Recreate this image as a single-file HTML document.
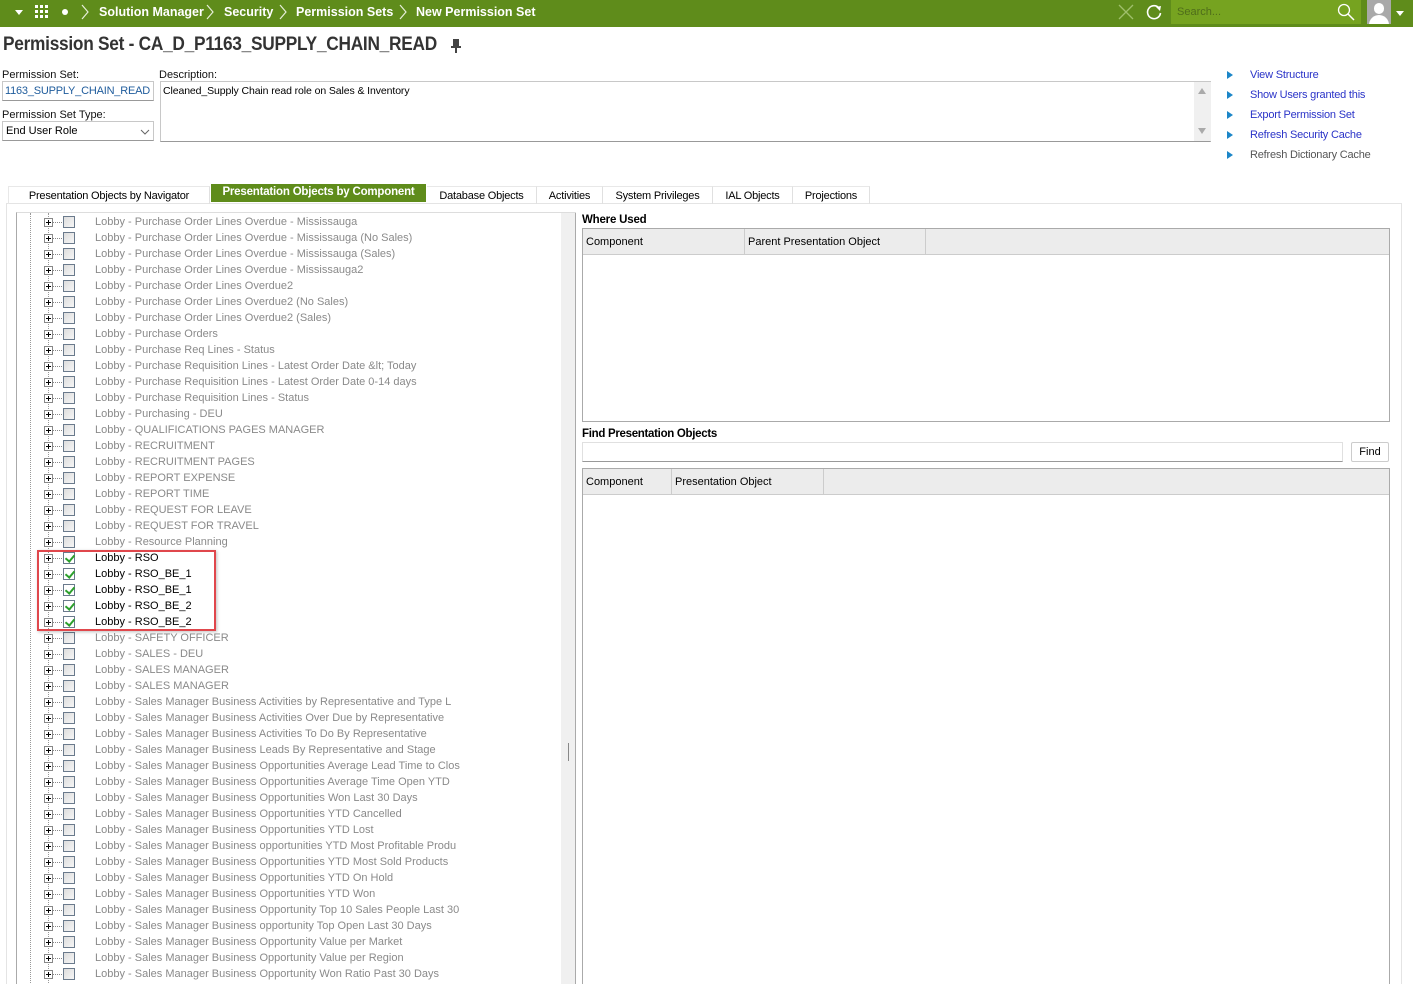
<!DOCTYPE html>
<html style="height:984px;overflow:hidden"><head><meta charset="utf-8"><style>
*{box-sizing:border-box;margin:0;padding:0}
body{width:1413px;height:984px;overflow:hidden;background:#fff;font-family:"Liberation Sans",sans-serif;font-size:11px;color:#000;position:relative}
.abs{position:absolute}
#top{left:0;top:0;width:1413px;height:27px;background:#5f8c1b}
#top .t{color:#fff;font-weight:bold;font-size:12.5px;top:5px}
#search{left:1171px;top:0;width:190px;height:24px;background:#76a320}
#search span{position:absolute;left:6px;top:6px;color:#4f6d1a;font-size:11px}
h1{position:absolute;left:3px;top:34px;font-size:19px;font-weight:bold;color:#333;letter-spacing:-0.3px;transform:scaleX(0.91);transform-origin:left}
.lbl{font-size:11px;color:#111}
.inp{border:1px solid #c8c8c8;border-bottom:1px solid #999;background:#fff}
.link{left:1250px;color:#2a33c8;font-size:11px;letter-spacing:-0.2px}
.tri{left:1227px;width:0;height:0;border-left:6px solid #1c86c8;border-top:4px solid transparent;border-bottom:4px solid transparent}
.tab{top:186px;height:18px;font-size:11px;padding:3px 0 0;text-align:center;border-right:1px solid #e0e0e0;border-top:1px solid #e8e8e8;letter-spacing:-0.2px}
.row{position:absolute;left:0;height:16px;width:540px}
.row .pl{position:absolute;left:43px;top:3px;width:9px;height:9px;border:1px solid #888;background:#fff}
.row .pl:before{content:"";position:absolute;left:1px;top:3px;width:5px;height:1px;background:#000}
.row .pl:after{content:"";position:absolute;left:3px;top:1px;width:1px;height:5px;background:#000}
.row .dl{position:absolute;left:52px;top:7px;width:9px;border-top:1px dotted #888}
.row .cb{position:absolute;left:62px;top:1px;width:12px;height:12px;border:1px solid #6a7a8c;background:linear-gradient(135deg,#ddd,#f6f6f6)}
.row .tx{position:absolute;left:94px;top:1px;color:#8a8a8a;font-size:11px;white-space:nowrap;letter-spacing:0}
.row.on .tx{color:#000}
.row.on .cb{background:#fff}
.row.on .cb:after{content:"";position:absolute;left:3px;top:0px;width:4px;height:7px;border-right:2px solid #2ca02c;border-bottom:2px solid #2ca02c;transform:rotate(40deg)}
.hdr{background:#ececec;border-bottom:1px solid #ccc}
</style></head><body>
<div id="top" class="abs">
 <div class="abs" style="left:15px;top:10px;border-left:4px solid transparent;border-right:4px solid transparent;border-top:5px solid #fff"></div>
 <svg class="abs" style="left:34px;top:4px" width="16" height="16"><g fill="#fff"><rect x="1" y="1" width="3" height="3"/><rect x="6" y="1" width="3" height="3"/><rect x="11" y="1" width="3" height="3"/><rect x="1" y="6" width="3" height="3"/><rect x="6" y="6" width="3" height="3"/><rect x="11" y="6" width="3" height="3"/><rect x="1" y="11" width="3" height="3"/><rect x="6" y="11" width="3" height="3"/><rect x="11" y="11" width="3" height="3"/></g></svg>
 <div class="abs" style="left:62px;top:9px;width:6px;height:6px;border-radius:3px;background:#fff"></div>
 <svg class="abs" style="left:80px;top:4px" width="10" height="16"><path d="M2 1L8 8L2 15" stroke="#e6eed8" fill="none" stroke-width="1.2"/></svg>
 <span class="abs t" style="left:99px">Solution Manager</span>
 <svg class="abs" style="left:205px;top:4px" width="10" height="16"><path d="M2 1L8 8L2 15" stroke="#e6eed8" fill="none" stroke-width="1.2"/></svg>
 <span class="abs t" style="left:224px">Security</span>
 <svg class="abs" style="left:278px;top:4px" width="10" height="16"><path d="M2 1L8 8L2 15" stroke="#e6eed8" fill="none" stroke-width="1.2"/></svg>
 <span class="abs t" style="left:296px">Permission Sets</span>
 <svg class="abs" style="left:398px;top:4px" width="10" height="16"><path d="M2 1L8 8L2 15" stroke="#e6eed8" fill="none" stroke-width="1.2"/></svg>
 <span class="abs t" style="left:416px">New Permission Set</span>
 <svg class="abs" style="left:1118px;top:4px" width="16" height="16"><path d="M1 1L15 15M15 1L1 15" stroke="#9fbf6c" stroke-width="1.3"/></svg>
 <svg class="abs" style="left:1145px;top:3px" width="18" height="18"><path d="M14 5A6.5 6.5 0 1 0 15.5 10" fill="none" stroke="#fff" stroke-width="1.6"/><path d="M11 4L16 3L15 8Z" fill="#fff"/></svg>
 <div id="search" class="abs"><span>Search...</span>
  <svg class="abs" style="left:166px;top:3px" width="18" height="18"><circle cx="7" cy="7" r="5.5" fill="none" stroke="#fff" stroke-width="1.3"/><path d="M11 11L17 17" stroke="#fff" stroke-width="1.5"/></svg></div>
 <div class="abs" style="left:1367px;top:0;width:24px;height:24px;background:#a9a9a9;overflow:hidden"><div class="abs" style="left:7px;top:3px;width:10px;height:11px;border-radius:5px;background:#fff"></div><div class="abs" style="left:2px;top:15px;width:20px;height:14px;border-radius:10px 10px 0 0;background:#fff"></div></div>
 <div class="abs" style="left:1396px;top:11px;border-left:4px solid transparent;border-right:4px solid transparent;border-top:5px solid #fff"></div>
</div>

<h1>Permission Set - CA_D_P1163_SUPPLY_CHAIN_READ</h1>
<svg class="abs" style="left:450px;top:39px" width="12" height="14"><path d="M3 1H9M4 1V7H8V1M1 8H11M6 8V14" stroke="#444" stroke-width="2" fill="#444"/></svg>

<div class="abs lbl" style="left:2px;top:69px">Permission Set:</div>
<div class="abs inp" style="left:2px;top:81px;width:152px;height:20px;overflow:hidden"><span class="abs" style="left:2px;top:3px;color:#1f5c9c;font-size:11px;letter-spacing:-0.2px">1163_SUPPLY_CHAIN_READ</span></div>
<div class="abs lbl" style="left:2px;top:109px">Permission Set Type:</div>
<div class="abs inp" style="left:2px;top:121px;width:152px;height:20px"><span class="abs" style="left:3px;top:3px;font-size:11px">End User Role</span><svg class="abs" style="left:137px;top:6px" width="10" height="8"><path d="M1 2L5 6L9 2" stroke="#666" fill="none"/></svg></div>
<div class="abs lbl" style="left:159px;top:69px">Description:</div>
<div class="abs inp" style="left:160px;top:81px;width:1051px;height:61px"><span class="abs" style="left:2px;top:3px;font-size:10.5px;letter-spacing:-0.1px">Cleaned_Supply Chain read role on Sales &amp; Inventory</span>
 <div class="abs" style="left:1033px;top:0;width:17px;height:59px;background:#f0f0f0"><div class="abs" style="left:4px;top:6px;border-left:4px solid transparent;border-right:4px solid transparent;border-bottom:6px solid #aaa"></div><div class="abs" style="left:4px;top:46px;border-left:4px solid transparent;border-right:4px solid transparent;border-top:6px solid #aaa"></div></div></div>

<div class="abs tri" style="top:71px"></div><div class="abs link" style="top:69px">View Structure</div>
<div class="abs tri" style="top:91px"></div><div class="abs link" style="top:89px">Show Users granted this</div>
<div class="abs tri" style="top:111px"></div><div class="abs link" style="top:109px">Export Permission Set</div>
<div class="abs tri" style="top:131px"></div><div class="abs link" style="top:129px">Refresh Security Cache</div>
<div class="abs tri" style="top:151px"></div><div class="abs link" style="top:149px;color:#555">Refresh Dictionary Cache</div>

<!-- tabs -->
<div class="abs" style="left:6px;top:203px;width:1396px;height:781px;border:1px solid #e4e4e4;border-bottom:none"></div>
<div class="abs tab" style="left:8px;width:202px;border-left:1px solid #e8e8e8">Presentation Objects by Navigator</div>
<div class="abs tab" style="left:211px;width:215px;top:184px;height:18px;background:#5f8c1b;color:#fff;font-weight:bold;font-size:11.5px;padding-top:2px;border:none">Presentation Objects by Component</div>
<div class="abs tab" style="left:427px;width:110px">Database Objects</div>
<div class="abs tab" style="left:537px;width:66px">Activities</div>
<div class="abs tab" style="left:603px;width:110px">System Privileges</div>
<div class="abs tab" style="left:713px;width:80px">IAL Objects</div>
<div class="abs tab" style="left:793px;width:77px">Projections</div>

<!-- tree -->
<div class="abs" style="left:16px;top:212px;width:560px;height:772px;border-left:1px solid #aaa;border-top:1px solid #ddd;overflow:hidden">
 <div class="abs" style="left:13px;top:0;height:772px;border-left:1px dotted #999"></div>
 <div class="abs" style="left:31px;top:0;height:772px;border-left:1px dotted #999"></div>
 <div class="abs" style="left:544px;top:0;width:15px;height:772px;background:#f0f0f0;border-right:1px solid #aaa"></div>
 <div class="abs" style="left:551px;top:530px;width:1px;height:18px;background:#888"></div>
 <div class="abs" style="left:-16px;top:2px;width:560px;height:772px">
 <div class="row" style="top:0px"><i class="pl"></i><i class="dl"></i><i class="cb"></i><span class="tx">Lobby - Purchase Order Lines Overdue - Mississauga</span></div>
 <div class="row" style="top:16px"><i class="pl"></i><i class="dl"></i><i class="cb"></i><span class="tx">Lobby - Purchase Order Lines Overdue - Mississauga (No Sales)</span></div>
 <div class="row" style="top:32px"><i class="pl"></i><i class="dl"></i><i class="cb"></i><span class="tx">Lobby - Purchase Order Lines Overdue - Mississauga (Sales)</span></div>
 <div class="row" style="top:48px"><i class="pl"></i><i class="dl"></i><i class="cb"></i><span class="tx">Lobby - Purchase Order Lines Overdue - Mississauga2</span></div>
 <div class="row" style="top:64px"><i class="pl"></i><i class="dl"></i><i class="cb"></i><span class="tx">Lobby - Purchase Order Lines Overdue2</span></div>
 <div class="row" style="top:80px"><i class="pl"></i><i class="dl"></i><i class="cb"></i><span class="tx">Lobby - Purchase Order Lines Overdue2 (No Sales)</span></div>
 <div class="row" style="top:96px"><i class="pl"></i><i class="dl"></i><i class="cb"></i><span class="tx">Lobby - Purchase Order Lines Overdue2 (Sales)</span></div>
 <div class="row" style="top:112px"><i class="pl"></i><i class="dl"></i><i class="cb"></i><span class="tx">Lobby - Purchase Orders</span></div>
 <div class="row" style="top:128px"><i class="pl"></i><i class="dl"></i><i class="cb"></i><span class="tx">Lobby - Purchase Req Lines - Status</span></div>
 <div class="row" style="top:144px"><i class="pl"></i><i class="dl"></i><i class="cb"></i><span class="tx">Lobby - Purchase Requisition Lines - Latest Order Date &amp;lt; Today</span></div>
 <div class="row" style="top:160px"><i class="pl"></i><i class="dl"></i><i class="cb"></i><span class="tx">Lobby - Purchase Requisition Lines - Latest Order Date 0-14 days</span></div>
 <div class="row" style="top:176px"><i class="pl"></i><i class="dl"></i><i class="cb"></i><span class="tx">Lobby - Purchase Requisition Lines - Status</span></div>
 <div class="row" style="top:192px"><i class="pl"></i><i class="dl"></i><i class="cb"></i><span class="tx">Lobby - Purchasing - DEU</span></div>
 <div class="row" style="top:208px"><i class="pl"></i><i class="dl"></i><i class="cb"></i><span class="tx">Lobby - QUALIFICATIONS PAGES MANAGER</span></div>
 <div class="row" style="top:224px"><i class="pl"></i><i class="dl"></i><i class="cb"></i><span class="tx">Lobby - RECRUITMENT</span></div>
 <div class="row" style="top:240px"><i class="pl"></i><i class="dl"></i><i class="cb"></i><span class="tx">Lobby - RECRUITMENT PAGES</span></div>
 <div class="row" style="top:256px"><i class="pl"></i><i class="dl"></i><i class="cb"></i><span class="tx">Lobby - REPORT EXPENSE</span></div>
 <div class="row" style="top:272px"><i class="pl"></i><i class="dl"></i><i class="cb"></i><span class="tx">Lobby - REPORT TIME</span></div>
 <div class="row" style="top:288px"><i class="pl"></i><i class="dl"></i><i class="cb"></i><span class="tx">Lobby - REQUEST FOR LEAVE</span></div>
 <div class="row" style="top:304px"><i class="pl"></i><i class="dl"></i><i class="cb"></i><span class="tx">Lobby - REQUEST FOR TRAVEL</span></div>
 <div class="row" style="top:320px"><i class="pl"></i><i class="dl"></i><i class="cb"></i><span class="tx">Lobby - Resource Planning</span></div>
 <div class="row on" style="top:336px"><i class="pl"></i><i class="dl"></i><i class="cb"></i><span class="tx">Lobby - RSO</span></div>
 <div class="row on" style="top:352px"><i class="pl"></i><i class="dl"></i><i class="cb"></i><span class="tx">Lobby - RSO_BE_1</span></div>
 <div class="row on" style="top:368px"><i class="pl"></i><i class="dl"></i><i class="cb"></i><span class="tx">Lobby - RSO_BE_1</span></div>
 <div class="row on" style="top:384px"><i class="pl"></i><i class="dl"></i><i class="cb"></i><span class="tx">Lobby - RSO_BE_2</span></div>
 <div class="row on" style="top:400px"><i class="pl"></i><i class="dl"></i><i class="cb"></i><span class="tx">Lobby - RSO_BE_2</span></div>
 <div class="row" style="top:416px"><i class="pl"></i><i class="dl"></i><i class="cb"></i><span class="tx">Lobby - SAFETY OFFICER</span></div>
 <div class="row" style="top:432px"><i class="pl"></i><i class="dl"></i><i class="cb"></i><span class="tx">Lobby - SALES - DEU</span></div>
 <div class="row" style="top:448px"><i class="pl"></i><i class="dl"></i><i class="cb"></i><span class="tx">Lobby - SALES MANAGER</span></div>
 <div class="row" style="top:464px"><i class="pl"></i><i class="dl"></i><i class="cb"></i><span class="tx">Lobby - SALES MANAGER</span></div>
 <div class="row" style="top:480px"><i class="pl"></i><i class="dl"></i><i class="cb"></i><span class="tx">Lobby - Sales Manager Business Activities by Representative and Type L</span></div>
 <div class="row" style="top:496px"><i class="pl"></i><i class="dl"></i><i class="cb"></i><span class="tx">Lobby - Sales Manager Business Activities Over Due by Representative</span></div>
 <div class="row" style="top:512px"><i class="pl"></i><i class="dl"></i><i class="cb"></i><span class="tx">Lobby - Sales Manager Business Activities To Do By Representative</span></div>
 <div class="row" style="top:528px"><i class="pl"></i><i class="dl"></i><i class="cb"></i><span class="tx">Lobby - Sales Manager Business Leads By Representative and Stage</span></div>
 <div class="row" style="top:544px"><i class="pl"></i><i class="dl"></i><i class="cb"></i><span class="tx">Lobby - Sales Manager Business Opportunities Average Lead Time to Clos</span></div>
 <div class="row" style="top:560px"><i class="pl"></i><i class="dl"></i><i class="cb"></i><span class="tx">Lobby - Sales Manager Business Opportunities Average Time Open YTD</span></div>
 <div class="row" style="top:576px"><i class="pl"></i><i class="dl"></i><i class="cb"></i><span class="tx">Lobby - Sales Manager Business Opportunities Won Last 30 Days</span></div>
 <div class="row" style="top:592px"><i class="pl"></i><i class="dl"></i><i class="cb"></i><span class="tx">Lobby - Sales Manager Business Opportunities YTD Cancelled</span></div>
 <div class="row" style="top:608px"><i class="pl"></i><i class="dl"></i><i class="cb"></i><span class="tx">Lobby - Sales Manager Business Opportunities YTD Lost</span></div>
 <div class="row" style="top:624px"><i class="pl"></i><i class="dl"></i><i class="cb"></i><span class="tx">Lobby - Sales Manager Business opportunities YTD Most Profitable Produ</span></div>
 <div class="row" style="top:640px"><i class="pl"></i><i class="dl"></i><i class="cb"></i><span class="tx">Lobby - Sales Manager Business Opportunities YTD Most Sold Products</span></div>
 <div class="row" style="top:656px"><i class="pl"></i><i class="dl"></i><i class="cb"></i><span class="tx">Lobby - Sales Manager Business Opportunities YTD On Hold</span></div>
 <div class="row" style="top:672px"><i class="pl"></i><i class="dl"></i><i class="cb"></i><span class="tx">Lobby - Sales Manager Business Opportunities YTD Won</span></div>
 <div class="row" style="top:688px"><i class="pl"></i><i class="dl"></i><i class="cb"></i><span class="tx">Lobby - Sales Manager Business Opportunity Top 10 Sales People Last 30</span></div>
 <div class="row" style="top:704px"><i class="pl"></i><i class="dl"></i><i class="cb"></i><span class="tx">Lobby - Sales Manager Business opportunity Top Open Last 30 Days</span></div>
 <div class="row" style="top:720px"><i class="pl"></i><i class="dl"></i><i class="cb"></i><span class="tx">Lobby - Sales Manager Business Opportunity Value per Market</span></div>
 <div class="row" style="top:736px"><i class="pl"></i><i class="dl"></i><i class="cb"></i><span class="tx">Lobby - Sales Manager Business Opportunity Value per Region</span></div>
 <div class="row" style="top:752px"><i class="pl"></i><i class="dl"></i><i class="cb"></i><span class="tx">Lobby - Sales Manager Business Opportunity Won Ratio Past 30 Days</span></div>
 </div>
</div>
<div class="abs" style="left:37px;top:550px;width:179px;height:81px;border:2px solid #e0474c;box-shadow:1px 1px 3px rgba(0,0,0,0.25)"></div>

<!-- right -->
<div class="abs" style="left:582px;top:214px;font-weight:bold;font-size:11.5px;letter-spacing:-0.2px">Where Used</div>
<div class="abs" style="left:582px;top:228px;width:808px;height:194px;border:1px solid #aaa">
 <div class="abs hdr" style="left:0;top:0;width:806px;height:26px"></div>
 <div class="abs" style="left:0;top:0;width:162px;height:26px;border-right:1px solid #ccc"><span class="abs" style="left:3px;top:7px">Component</span></div>
 <div class="abs" style="left:162px;top:0;width:181px;height:26px;border-right:1px solid #ccc"><span class="abs" style="left:3px;top:7px">Parent Presentation Object</span></div>
</div>
<div class="abs" style="left:582px;top:428px;font-weight:bold;font-size:11.5px;letter-spacing:-0.3px">Find Presentation Objects</div>
<div class="abs inp" style="left:582px;top:442px;width:761px;height:20px;border-color:#e0e0e0;border-bottom-color:#999"></div>
<div class="abs" style="left:1351px;top:442px;width:38px;height:20px;border:1px solid #ccc;border-radius:2px;text-align:center;padding-top:3px">Find</div>
<div class="abs" style="left:582px;top:468px;width:808px;height:516px;border:1px solid #aaa;border-bottom:none">
 <div class="abs hdr" style="left:0;top:0;width:806px;height:26px"></div>
 <div class="abs" style="left:0;top:0;width:89px;height:26px;border-right:1px solid #ccc"><span class="abs" style="left:3px;top:7px">Component</span></div>
 <div class="abs" style="left:89px;top:0;width:152px;height:26px;border-right:1px solid #ccc"><span class="abs" style="left:3px;top:7px">Presentation Object</span></div>
</div>
</body></html>
